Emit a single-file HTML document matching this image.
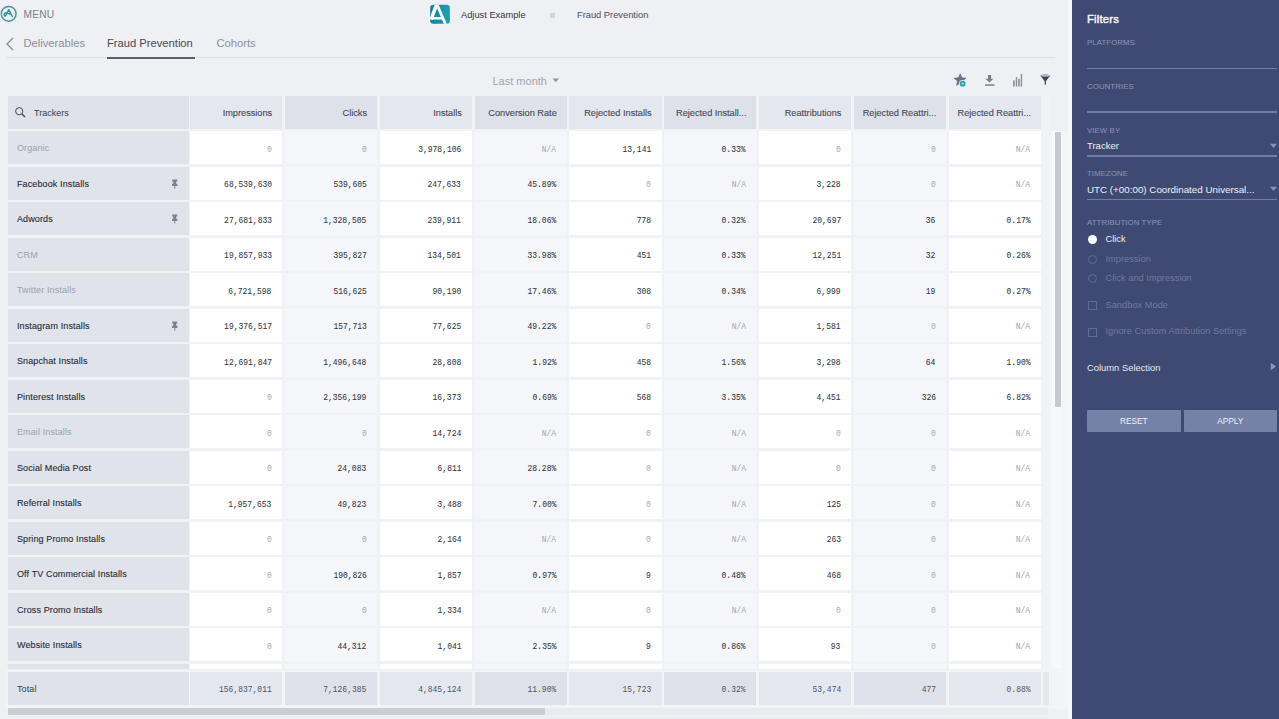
<!DOCTYPE html>
<html><head><meta charset="utf-8"><title>Fraud Prevention</title>
<style>
*{margin:0;padding:0;box-sizing:border-box}
html,body{width:1279px;height:719px;overflow:hidden;background:#eef0f4;font-family:"Liberation Sans",sans-serif}
.a{position:absolute}
.c{position:absolute;overflow:hidden;white-space:nowrap}
.tn{position:absolute;left:9px;font-size:9px;letter-spacing:0.12px;color:#2a2d38;-webkit-text-stroke:0.12px #2a2d38}
.tn.g{color:#9da1ad;-webkit-text-stroke:0}
.num{position:absolute;right:10.5px;font-family:"Liberation Mono",monospace;font-size:9.5px;color:#30333c;-webkit-text-stroke:0.06px #30333c;transform:scaleX(0.84);transform-origin:100% 50%}
.num.z{color:#a3a6b0;-webkit-text-stroke:0}
.hd{position:absolute;right:10px;font-size:9.2px;color:#464955;-webkit-text-stroke:0.12px #464955}
.sb{position:absolute;left:1072px;top:0;width:207px;height:719px;background:#3f4a72}
.lab{position:absolute;left:1087px;font-size:7.8px;color:#8590b8;-webkit-text-stroke:0.1px #8590b8;letter-spacing:0.1px}
.ln{position:absolute;left:1087px;width:190px;height:1.5px;background:#6f7bab}
.st{position:absolute;font-size:9.3px;color:#eef0f6}
.dim{color:#6d78a3}
</style></head><body>
<svg class="a" style="left:0;top:2px" width="24" height="24" viewBox="0 0 24 24"><circle cx="8.7" cy="11.85" r="7.4" fill="none" stroke="#3f98a4" stroke-width="1.4"/><path d="M8.8 7.7 L12.3 14.5 M8.8 7.7 L5.6 13.8 Q4.2 14.6 4.2 12 Q4.3 10.6 6 10.9 L11 12.3" fill="none" stroke="#3a95a2" stroke-width="1.5" stroke-linejoin="round" stroke-linecap="round"/></svg>
<div class="a" style="left:23.5px;top:8.5px;font-size:10.2px;color:#7b7f8c;letter-spacing:0.2px">MENU</div>
<svg class="a" style="left:428px;top:3px" width="24" height="23" viewBox="0 0 24 23"><defs><linearGradient id="lg" x1="0" x2="1" y1="0" y2="0"><stop offset="0" stop-color="#117f95"/><stop offset="1" stop-color="#1ba2b8"/></linearGradient><clipPath id="cp"><rect x="2.2" y="1.7" width="19.7" height="19.1" rx="3.2"/></clipPath></defs><rect x="2.2" y="1.7" width="19.7" height="19.1" rx="3.2" fill="url(#lg)"/><g clip-path="url(#cp)" stroke="#fbfdfe" fill="none"><path d="M9.4 -0.5 L3.1 16.4" stroke-width="3.6"/><path d="M8.2 -0.5 L17.8 22" stroke-width="2.8"/><path d="M0 15.2 H14" stroke-width="2.6"/></g></svg>
<div class="a" style="left:461px;top:9.5px;font-size:9.3px;color:#343743">Adjust Example</div>
<div class="a" style="left:550px;top:12.5px;width:5px;height:5px;background:#d2d4da;border-radius:1px"></div>
<div class="a" style="left:577px;top:9.5px;font-size:9.3px;color:#4b4e5a">Fraud Prevention</div>
<svg class="a" style="left:5px;top:37px" width="10" height="14" viewBox="0 0 10 14"><path d="M8 1 L2 7 L8 13" fill="none" stroke="#8a8e9a" stroke-width="1.3"/></svg>
<div class="a" style="left:23.5px;top:37px;font-size:11.2px;color:#8b8f9b">Deliverables</div>
<div class="a" style="left:107px;top:37px;font-size:11.2px;color:#454855">Fraud Prevention</div>
<div class="a" style="left:216.5px;top:37px;font-size:11.2px;color:#8b8f9b">Cohorts</div>
<div class="a" style="left:6px;top:57px;width:1049px;height:1px;background:#dfe1e6"></div>
<div class="a" style="left:107px;top:56.5px;width:88px;height:2px;background:#5b5e6c"></div>
<div class="a" style="left:492.5px;top:74.5px;font-size:11px;color:#a2a5b0">Last month</div>
<svg class="a" style="left:552px;top:78px" width="8" height="5" viewBox="0 0 8 5"><path d="M0.5 0.5 L7 0.5 L3.75 4.2 Z" fill="#8e919c"/></svg>
<svg class="a" style="left:950px;top:70px" width="20" height="20" viewBox="0 0 20 20"><path d="M10.2 3.7 L11.8 7.6 L15.9 8.2 L12.8 10.9 L13.6 15 L10.2 12.9 L6.5 15.5 L7.4 11 L4.1 8.2 L8.5 7.6 Z" fill="#6b7386" stroke="#6b7386" stroke-width="0.6" stroke-linejoin="round"/><circle cx="12.6" cy="13.65" r="3.6" fill="#f0f2f6"/><circle cx="12.6" cy="13.65" r="2.9" fill="#2a9ea5"/><circle cx="12.6" cy="13.65" r="1.2" fill="#7fe6ea"/></svg>
<svg class="a" style="left:983px;top:72px" width="14" height="16" viewBox="0 0 14 16"><path d="M5 2.9 H8.1 V6.8 H10.3 L6.55 10.4 L2.4 6.8 H5 Z" fill="#7c7f8b"/><rect x="2" y="12.3" width="9.5" height="1.5" fill="#7c7f8b"/></svg>
<svg class="a" style="left:1011px;top:72px" width="13" height="16" viewBox="0 0 13 16"><rect x="2.1" y="8.4" width="1.7" height="6.1" fill="#8c8f9c"/><rect x="4.8" y="5.1" width="1.4" height="9.4" fill="#8c8f9c"/><rect x="7" y="6.8" width="1.9" height="7.7" fill="#9a9dab"/><rect x="9.7" y="1.9" width="1.4" height="12.6" fill="#8c8f9c"/></svg>
<svg class="a" style="left:1039px;top:72px" width="13" height="15" viewBox="0 0 13 15"><path d="M1.2 3.6 Q6.2 1.2 11.3 3.6 L7 9 L6.8 12.7 H5.8 L5.6 9 Z" fill="#3c3f4d"/><ellipse cx="6.25" cy="3.6" rx="4.6" ry="1.2" fill="#b6b8c6"/></svg>
<div class="a" style="left:1044px;top:96px;width:6px;height:33px;background:#e4e6ec;border-radius:1px"></div>
<div class="a" style="left:1044px;top:131px;width:28px;height:578px;background:#f3f4f7"></div>
<div class="a" style="left:1052px;top:131px;width:10px;height:537px;background:#f8f8fa"></div>
<div class="a" style="left:1054.5px;top:132px;width:6.5px;height:275px;background:#c8c9d0;border-radius:1px"></div>
<div class="a" style="left:8px;top:96px;width:1042px;height:573px;background:#f1f2f6"></div>
<div class="c" style="left:8px;top:96px;width:180.5px;height:33px;background:#dfe2e9"><svg class="a" style="left:6px;top:10px" width="13" height="13" viewBox="0 0 13 13"><circle cx="5.2" cy="5.2" r="3.6" fill="none" stroke="#454852" stroke-width="1"/><path d="M7.8 7.8 L11 11" stroke="#454852" stroke-width="1.4"/></svg><div class="a" style="left:26px;top:12px;font-size:9px;color:#3a3d49">Trackers</div></div>
<div class="c" style="left:190px;top:96px;width:92.2px;height:33px;background:#e5e7ef"><div class="hd" style="top:12px">Impressions</div></div>
<div class="c" style="left:284.86px;top:96px;width:92.2px;height:33px;background:#dee1e9"><div class="hd" style="top:12px">Clicks</div></div>
<div class="c" style="left:379.72px;top:96px;width:92.2px;height:33px;background:#e5e7ef"><div class="hd" style="top:12px">Installs</div></div>
<div class="c" style="left:474.58px;top:96px;width:92.2px;height:33px;background:#dee1e9"><div class="hd" style="top:12px">Conversion Rate</div></div>
<div class="c" style="left:569.44px;top:96px;width:92.2px;height:33px;background:#e5e7ef"><div class="hd" style="top:12px">Rejected Installs</div></div>
<div class="c" style="left:664.3px;top:96px;width:92.2px;height:33px;background:#dee1e9"><div class="hd" style="top:12px">Rejected Install...</div></div>
<div class="c" style="left:759.16px;top:96px;width:92.2px;height:33px;background:#e5e7ef"><div class="hd" style="top:12px">Reattributions</div></div>
<div class="c" style="left:854.02px;top:96px;width:92.2px;height:33px;background:#dee1e9"><div class="hd" style="top:12px">Rejected Reattri...</div></div>
<div class="c" style="left:948.88px;top:96px;width:92.2px;height:33px;background:#e5e7ef"><div class="hd" style="top:12px">Rejected Reattri...</div></div>
<div class="c" style="left:8px;top:131px;width:180.5px;height:33.2px;background:#e0e3ea"><div class="tn g" style="top:12.3px">Organic</div></div>
<div class="c" style="left:190px;top:131px;width:92.2px;height:33.2px;background:#ffffff"><div class="num z" style="top:12.6px">0</div></div>
<div class="c" style="left:284.86px;top:131px;width:92.2px;height:33.2px;background:#f5f6fa"><div class="num z" style="top:12.6px">0</div></div>
<div class="c" style="left:379.72px;top:131px;width:92.2px;height:33.2px;background:#ffffff"><div class="num" style="top:12.6px">3,978,106</div></div>
<div class="c" style="left:474.58px;top:131px;width:92.2px;height:33.2px;background:#f5f6fa"><div class="num z" style="top:12.6px">N/A</div></div>
<div class="c" style="left:569.44px;top:131px;width:92.2px;height:33.2px;background:#ffffff"><div class="num" style="top:12.6px">13,141</div></div>
<div class="c" style="left:664.3px;top:131px;width:92.2px;height:33.2px;background:#f5f6fa"><div class="num" style="top:12.6px">0.33%</div></div>
<div class="c" style="left:759.16px;top:131px;width:92.2px;height:33.2px;background:#ffffff"><div class="num z" style="top:12.6px">0</div></div>
<div class="c" style="left:854.02px;top:131px;width:92.2px;height:33.2px;background:#f5f6fa"><div class="num z" style="top:12.6px">0</div></div>
<div class="c" style="left:948.88px;top:131px;width:92.2px;height:33.2px;background:#ffffff"><div class="num z" style="top:12.6px">N/A</div></div>
<div class="c" style="left:8px;top:166.5px;width:180.5px;height:33.2px;background:#e0e3ea"><div class="tn" style="top:12.3px">Facebook Installs</div><svg class="a" style="left:163px;top:12px" width="8" height="10" viewBox="0 0 8 10"><path d="M1.2 0.4 H6.2 V2.6 H5.2 V4.6 L6.4 5.2 V7 H1 V5.2 L2.2 4.6 V2.6 H1.2 Z M3.3 7 H4.3 V9.5 H3.3 Z" fill="#7e818d"/></svg></div>
<div class="c" style="left:190px;top:166.5px;width:92.2px;height:33.2px;background:#ffffff"><div class="num" style="top:12.6px">68,539,630</div></div>
<div class="c" style="left:284.86px;top:166.5px;width:92.2px;height:33.2px;background:#f5f6fa"><div class="num" style="top:12.6px">539,605</div></div>
<div class="c" style="left:379.72px;top:166.5px;width:92.2px;height:33.2px;background:#ffffff"><div class="num" style="top:12.6px">247,633</div></div>
<div class="c" style="left:474.58px;top:166.5px;width:92.2px;height:33.2px;background:#f5f6fa"><div class="num" style="top:12.6px">45.89%</div></div>
<div class="c" style="left:569.44px;top:166.5px;width:92.2px;height:33.2px;background:#ffffff"><div class="num z" style="top:12.6px">0</div></div>
<div class="c" style="left:664.3px;top:166.5px;width:92.2px;height:33.2px;background:#f5f6fa"><div class="num z" style="top:12.6px">N/A</div></div>
<div class="c" style="left:759.16px;top:166.5px;width:92.2px;height:33.2px;background:#ffffff"><div class="num" style="top:12.6px">3,228</div></div>
<div class="c" style="left:854.02px;top:166.5px;width:92.2px;height:33.2px;background:#f5f6fa"><div class="num z" style="top:12.6px">0</div></div>
<div class="c" style="left:948.88px;top:166.5px;width:92.2px;height:33.2px;background:#ffffff"><div class="num z" style="top:12.6px">N/A</div></div>
<div class="c" style="left:8px;top:202px;width:180.5px;height:33.2px;background:#e0e3ea"><div class="tn" style="top:12.3px">Adwords</div><svg class="a" style="left:163px;top:12px" width="8" height="10" viewBox="0 0 8 10"><path d="M1.2 0.4 H6.2 V2.6 H5.2 V4.6 L6.4 5.2 V7 H1 V5.2 L2.2 4.6 V2.6 H1.2 Z M3.3 7 H4.3 V9.5 H3.3 Z" fill="#7e818d"/></svg></div>
<div class="c" style="left:190px;top:202px;width:92.2px;height:33.2px;background:#ffffff"><div class="num" style="top:12.6px">27,681,833</div></div>
<div class="c" style="left:284.86px;top:202px;width:92.2px;height:33.2px;background:#f5f6fa"><div class="num" style="top:12.6px">1,328,505</div></div>
<div class="c" style="left:379.72px;top:202px;width:92.2px;height:33.2px;background:#ffffff"><div class="num" style="top:12.6px">239,911</div></div>
<div class="c" style="left:474.58px;top:202px;width:92.2px;height:33.2px;background:#f5f6fa"><div class="num" style="top:12.6px">18.06%</div></div>
<div class="c" style="left:569.44px;top:202px;width:92.2px;height:33.2px;background:#ffffff"><div class="num" style="top:12.6px">778</div></div>
<div class="c" style="left:664.3px;top:202px;width:92.2px;height:33.2px;background:#f5f6fa"><div class="num" style="top:12.6px">0.32%</div></div>
<div class="c" style="left:759.16px;top:202px;width:92.2px;height:33.2px;background:#ffffff"><div class="num" style="top:12.6px">20,697</div></div>
<div class="c" style="left:854.02px;top:202px;width:92.2px;height:33.2px;background:#f5f6fa"><div class="num" style="top:12.6px">36</div></div>
<div class="c" style="left:948.88px;top:202px;width:92.2px;height:33.2px;background:#ffffff"><div class="num" style="top:12.6px">0.17%</div></div>
<div class="c" style="left:8px;top:237.5px;width:180.5px;height:33.2px;background:#e0e3ea"><div class="tn g" style="top:12.3px">CRM</div></div>
<div class="c" style="left:190px;top:237.5px;width:92.2px;height:33.2px;background:#ffffff"><div class="num" style="top:12.6px">19,857,933</div></div>
<div class="c" style="left:284.86px;top:237.5px;width:92.2px;height:33.2px;background:#f5f6fa"><div class="num" style="top:12.6px">395,827</div></div>
<div class="c" style="left:379.72px;top:237.5px;width:92.2px;height:33.2px;background:#ffffff"><div class="num" style="top:12.6px">134,501</div></div>
<div class="c" style="left:474.58px;top:237.5px;width:92.2px;height:33.2px;background:#f5f6fa"><div class="num" style="top:12.6px">33.98%</div></div>
<div class="c" style="left:569.44px;top:237.5px;width:92.2px;height:33.2px;background:#ffffff"><div class="num" style="top:12.6px">451</div></div>
<div class="c" style="left:664.3px;top:237.5px;width:92.2px;height:33.2px;background:#f5f6fa"><div class="num" style="top:12.6px">0.33%</div></div>
<div class="c" style="left:759.16px;top:237.5px;width:92.2px;height:33.2px;background:#ffffff"><div class="num" style="top:12.6px">12,251</div></div>
<div class="c" style="left:854.02px;top:237.5px;width:92.2px;height:33.2px;background:#f5f6fa"><div class="num" style="top:12.6px">32</div></div>
<div class="c" style="left:948.88px;top:237.5px;width:92.2px;height:33.2px;background:#ffffff"><div class="num" style="top:12.6px">0.26%</div></div>
<div class="c" style="left:8px;top:273px;width:180.5px;height:33.2px;background:#e0e3ea"><div class="tn g" style="top:12.3px">Twitter Installs</div></div>
<div class="c" style="left:190px;top:273px;width:92.2px;height:33.2px;background:#ffffff"><div class="num" style="top:12.6px">6,721,598</div></div>
<div class="c" style="left:284.86px;top:273px;width:92.2px;height:33.2px;background:#f5f6fa"><div class="num" style="top:12.6px">516,625</div></div>
<div class="c" style="left:379.72px;top:273px;width:92.2px;height:33.2px;background:#ffffff"><div class="num" style="top:12.6px">90,190</div></div>
<div class="c" style="left:474.58px;top:273px;width:92.2px;height:33.2px;background:#f5f6fa"><div class="num" style="top:12.6px">17.46%</div></div>
<div class="c" style="left:569.44px;top:273px;width:92.2px;height:33.2px;background:#ffffff"><div class="num" style="top:12.6px">308</div></div>
<div class="c" style="left:664.3px;top:273px;width:92.2px;height:33.2px;background:#f5f6fa"><div class="num" style="top:12.6px">0.34%</div></div>
<div class="c" style="left:759.16px;top:273px;width:92.2px;height:33.2px;background:#ffffff"><div class="num" style="top:12.6px">6,999</div></div>
<div class="c" style="left:854.02px;top:273px;width:92.2px;height:33.2px;background:#f5f6fa"><div class="num" style="top:12.6px">19</div></div>
<div class="c" style="left:948.88px;top:273px;width:92.2px;height:33.2px;background:#ffffff"><div class="num" style="top:12.6px">0.27%</div></div>
<div class="c" style="left:8px;top:308.5px;width:180.5px;height:33.2px;background:#e0e3ea"><div class="tn" style="top:12.3px">Instagram Installs</div><svg class="a" style="left:163px;top:12px" width="8" height="10" viewBox="0 0 8 10"><path d="M1.2 0.4 H6.2 V2.6 H5.2 V4.6 L6.4 5.2 V7 H1 V5.2 L2.2 4.6 V2.6 H1.2 Z M3.3 7 H4.3 V9.5 H3.3 Z" fill="#7e818d"/></svg></div>
<div class="c" style="left:190px;top:308.5px;width:92.2px;height:33.2px;background:#ffffff"><div class="num" style="top:12.6px">19,376,517</div></div>
<div class="c" style="left:284.86px;top:308.5px;width:92.2px;height:33.2px;background:#f5f6fa"><div class="num" style="top:12.6px">157,713</div></div>
<div class="c" style="left:379.72px;top:308.5px;width:92.2px;height:33.2px;background:#ffffff"><div class="num" style="top:12.6px">77,625</div></div>
<div class="c" style="left:474.58px;top:308.5px;width:92.2px;height:33.2px;background:#f5f6fa"><div class="num" style="top:12.6px">49.22%</div></div>
<div class="c" style="left:569.44px;top:308.5px;width:92.2px;height:33.2px;background:#ffffff"><div class="num z" style="top:12.6px">0</div></div>
<div class="c" style="left:664.3px;top:308.5px;width:92.2px;height:33.2px;background:#f5f6fa"><div class="num z" style="top:12.6px">N/A</div></div>
<div class="c" style="left:759.16px;top:308.5px;width:92.2px;height:33.2px;background:#ffffff"><div class="num" style="top:12.6px">1,581</div></div>
<div class="c" style="left:854.02px;top:308.5px;width:92.2px;height:33.2px;background:#f5f6fa"><div class="num z" style="top:12.6px">0</div></div>
<div class="c" style="left:948.88px;top:308.5px;width:92.2px;height:33.2px;background:#ffffff"><div class="num z" style="top:12.6px">N/A</div></div>
<div class="c" style="left:8px;top:344px;width:180.5px;height:33.2px;background:#e0e3ea"><div class="tn" style="top:12.3px">Snapchat Installs</div></div>
<div class="c" style="left:190px;top:344px;width:92.2px;height:33.2px;background:#ffffff"><div class="num" style="top:12.6px">12,691,847</div></div>
<div class="c" style="left:284.86px;top:344px;width:92.2px;height:33.2px;background:#f5f6fa"><div class="num" style="top:12.6px">1,496,648</div></div>
<div class="c" style="left:379.72px;top:344px;width:92.2px;height:33.2px;background:#ffffff"><div class="num" style="top:12.6px">28,808</div></div>
<div class="c" style="left:474.58px;top:344px;width:92.2px;height:33.2px;background:#f5f6fa"><div class="num" style="top:12.6px">1.92%</div></div>
<div class="c" style="left:569.44px;top:344px;width:92.2px;height:33.2px;background:#ffffff"><div class="num" style="top:12.6px">458</div></div>
<div class="c" style="left:664.3px;top:344px;width:92.2px;height:33.2px;background:#f5f6fa"><div class="num" style="top:12.6px">1.56%</div></div>
<div class="c" style="left:759.16px;top:344px;width:92.2px;height:33.2px;background:#ffffff"><div class="num" style="top:12.6px">3,298</div></div>
<div class="c" style="left:854.02px;top:344px;width:92.2px;height:33.2px;background:#f5f6fa"><div class="num" style="top:12.6px">64</div></div>
<div class="c" style="left:948.88px;top:344px;width:92.2px;height:33.2px;background:#ffffff"><div class="num" style="top:12.6px">1.90%</div></div>
<div class="c" style="left:8px;top:379.5px;width:180.5px;height:33.2px;background:#e0e3ea"><div class="tn" style="top:12.3px">Pinterest Installs</div></div>
<div class="c" style="left:190px;top:379.5px;width:92.2px;height:33.2px;background:#ffffff"><div class="num z" style="top:12.6px">0</div></div>
<div class="c" style="left:284.86px;top:379.5px;width:92.2px;height:33.2px;background:#f5f6fa"><div class="num" style="top:12.6px">2,356,199</div></div>
<div class="c" style="left:379.72px;top:379.5px;width:92.2px;height:33.2px;background:#ffffff"><div class="num" style="top:12.6px">16,373</div></div>
<div class="c" style="left:474.58px;top:379.5px;width:92.2px;height:33.2px;background:#f5f6fa"><div class="num" style="top:12.6px">0.69%</div></div>
<div class="c" style="left:569.44px;top:379.5px;width:92.2px;height:33.2px;background:#ffffff"><div class="num" style="top:12.6px">568</div></div>
<div class="c" style="left:664.3px;top:379.5px;width:92.2px;height:33.2px;background:#f5f6fa"><div class="num" style="top:12.6px">3.35%</div></div>
<div class="c" style="left:759.16px;top:379.5px;width:92.2px;height:33.2px;background:#ffffff"><div class="num" style="top:12.6px">4,451</div></div>
<div class="c" style="left:854.02px;top:379.5px;width:92.2px;height:33.2px;background:#f5f6fa"><div class="num" style="top:12.6px">326</div></div>
<div class="c" style="left:948.88px;top:379.5px;width:92.2px;height:33.2px;background:#ffffff"><div class="num" style="top:12.6px">6.82%</div></div>
<div class="c" style="left:8px;top:415px;width:180.5px;height:33.2px;background:#e0e3ea"><div class="tn g" style="top:12.3px">Email Installs</div></div>
<div class="c" style="left:190px;top:415px;width:92.2px;height:33.2px;background:#ffffff"><div class="num z" style="top:12.6px">0</div></div>
<div class="c" style="left:284.86px;top:415px;width:92.2px;height:33.2px;background:#f5f6fa"><div class="num z" style="top:12.6px">0</div></div>
<div class="c" style="left:379.72px;top:415px;width:92.2px;height:33.2px;background:#ffffff"><div class="num" style="top:12.6px">14,724</div></div>
<div class="c" style="left:474.58px;top:415px;width:92.2px;height:33.2px;background:#f5f6fa"><div class="num z" style="top:12.6px">N/A</div></div>
<div class="c" style="left:569.44px;top:415px;width:92.2px;height:33.2px;background:#ffffff"><div class="num z" style="top:12.6px">0</div></div>
<div class="c" style="left:664.3px;top:415px;width:92.2px;height:33.2px;background:#f5f6fa"><div class="num z" style="top:12.6px">N/A</div></div>
<div class="c" style="left:759.16px;top:415px;width:92.2px;height:33.2px;background:#ffffff"><div class="num z" style="top:12.6px">0</div></div>
<div class="c" style="left:854.02px;top:415px;width:92.2px;height:33.2px;background:#f5f6fa"><div class="num z" style="top:12.6px">0</div></div>
<div class="c" style="left:948.88px;top:415px;width:92.2px;height:33.2px;background:#ffffff"><div class="num z" style="top:12.6px">N/A</div></div>
<div class="c" style="left:8px;top:450.5px;width:180.5px;height:33.2px;background:#e0e3ea"><div class="tn" style="top:12.3px">Social Media Post</div></div>
<div class="c" style="left:190px;top:450.5px;width:92.2px;height:33.2px;background:#ffffff"><div class="num z" style="top:12.6px">0</div></div>
<div class="c" style="left:284.86px;top:450.5px;width:92.2px;height:33.2px;background:#f5f6fa"><div class="num" style="top:12.6px">24,083</div></div>
<div class="c" style="left:379.72px;top:450.5px;width:92.2px;height:33.2px;background:#ffffff"><div class="num" style="top:12.6px">6,811</div></div>
<div class="c" style="left:474.58px;top:450.5px;width:92.2px;height:33.2px;background:#f5f6fa"><div class="num" style="top:12.6px">28.28%</div></div>
<div class="c" style="left:569.44px;top:450.5px;width:92.2px;height:33.2px;background:#ffffff"><div class="num z" style="top:12.6px">0</div></div>
<div class="c" style="left:664.3px;top:450.5px;width:92.2px;height:33.2px;background:#f5f6fa"><div class="num z" style="top:12.6px">N/A</div></div>
<div class="c" style="left:759.16px;top:450.5px;width:92.2px;height:33.2px;background:#ffffff"><div class="num z" style="top:12.6px">0</div></div>
<div class="c" style="left:854.02px;top:450.5px;width:92.2px;height:33.2px;background:#f5f6fa"><div class="num z" style="top:12.6px">0</div></div>
<div class="c" style="left:948.88px;top:450.5px;width:92.2px;height:33.2px;background:#ffffff"><div class="num z" style="top:12.6px">N/A</div></div>
<div class="c" style="left:8px;top:486px;width:180.5px;height:33.2px;background:#e0e3ea"><div class="tn" style="top:12.3px">Referral Installs</div></div>
<div class="c" style="left:190px;top:486px;width:92.2px;height:33.2px;background:#ffffff"><div class="num" style="top:12.6px">1,957,653</div></div>
<div class="c" style="left:284.86px;top:486px;width:92.2px;height:33.2px;background:#f5f6fa"><div class="num" style="top:12.6px">49,823</div></div>
<div class="c" style="left:379.72px;top:486px;width:92.2px;height:33.2px;background:#ffffff"><div class="num" style="top:12.6px">3,488</div></div>
<div class="c" style="left:474.58px;top:486px;width:92.2px;height:33.2px;background:#f5f6fa"><div class="num" style="top:12.6px">7.00%</div></div>
<div class="c" style="left:569.44px;top:486px;width:92.2px;height:33.2px;background:#ffffff"><div class="num z" style="top:12.6px">0</div></div>
<div class="c" style="left:664.3px;top:486px;width:92.2px;height:33.2px;background:#f5f6fa"><div class="num z" style="top:12.6px">N/A</div></div>
<div class="c" style="left:759.16px;top:486px;width:92.2px;height:33.2px;background:#ffffff"><div class="num" style="top:12.6px">125</div></div>
<div class="c" style="left:854.02px;top:486px;width:92.2px;height:33.2px;background:#f5f6fa"><div class="num z" style="top:12.6px">0</div></div>
<div class="c" style="left:948.88px;top:486px;width:92.2px;height:33.2px;background:#ffffff"><div class="num z" style="top:12.6px">N/A</div></div>
<div class="c" style="left:8px;top:521.5px;width:180.5px;height:33.2px;background:#e0e3ea"><div class="tn" style="top:12.3px">Spring Promo Installs</div></div>
<div class="c" style="left:190px;top:521.5px;width:92.2px;height:33.2px;background:#ffffff"><div class="num z" style="top:12.6px">0</div></div>
<div class="c" style="left:284.86px;top:521.5px;width:92.2px;height:33.2px;background:#f5f6fa"><div class="num z" style="top:12.6px">0</div></div>
<div class="c" style="left:379.72px;top:521.5px;width:92.2px;height:33.2px;background:#ffffff"><div class="num" style="top:12.6px">2,164</div></div>
<div class="c" style="left:474.58px;top:521.5px;width:92.2px;height:33.2px;background:#f5f6fa"><div class="num z" style="top:12.6px">N/A</div></div>
<div class="c" style="left:569.44px;top:521.5px;width:92.2px;height:33.2px;background:#ffffff"><div class="num z" style="top:12.6px">0</div></div>
<div class="c" style="left:664.3px;top:521.5px;width:92.2px;height:33.2px;background:#f5f6fa"><div class="num z" style="top:12.6px">N/A</div></div>
<div class="c" style="left:759.16px;top:521.5px;width:92.2px;height:33.2px;background:#ffffff"><div class="num" style="top:12.6px">263</div></div>
<div class="c" style="left:854.02px;top:521.5px;width:92.2px;height:33.2px;background:#f5f6fa"><div class="num z" style="top:12.6px">0</div></div>
<div class="c" style="left:948.88px;top:521.5px;width:92.2px;height:33.2px;background:#ffffff"><div class="num z" style="top:12.6px">N/A</div></div>
<div class="c" style="left:8px;top:557px;width:180.5px;height:33.2px;background:#e0e3ea"><div class="tn" style="top:12.3px">Off TV Commercial Installs</div></div>
<div class="c" style="left:190px;top:557px;width:92.2px;height:33.2px;background:#ffffff"><div class="num z" style="top:12.6px">0</div></div>
<div class="c" style="left:284.86px;top:557px;width:92.2px;height:33.2px;background:#f5f6fa"><div class="num" style="top:12.6px">190,826</div></div>
<div class="c" style="left:379.72px;top:557px;width:92.2px;height:33.2px;background:#ffffff"><div class="num" style="top:12.6px">1,857</div></div>
<div class="c" style="left:474.58px;top:557px;width:92.2px;height:33.2px;background:#f5f6fa"><div class="num" style="top:12.6px">0.97%</div></div>
<div class="c" style="left:569.44px;top:557px;width:92.2px;height:33.2px;background:#ffffff"><div class="num" style="top:12.6px">9</div></div>
<div class="c" style="left:664.3px;top:557px;width:92.2px;height:33.2px;background:#f5f6fa"><div class="num" style="top:12.6px">0.48%</div></div>
<div class="c" style="left:759.16px;top:557px;width:92.2px;height:33.2px;background:#ffffff"><div class="num" style="top:12.6px">468</div></div>
<div class="c" style="left:854.02px;top:557px;width:92.2px;height:33.2px;background:#f5f6fa"><div class="num z" style="top:12.6px">0</div></div>
<div class="c" style="left:948.88px;top:557px;width:92.2px;height:33.2px;background:#ffffff"><div class="num z" style="top:12.6px">N/A</div></div>
<div class="c" style="left:8px;top:592.5px;width:180.5px;height:33.2px;background:#e0e3ea"><div class="tn" style="top:12.3px">Cross Promo Installs</div></div>
<div class="c" style="left:190px;top:592.5px;width:92.2px;height:33.2px;background:#ffffff"><div class="num z" style="top:12.6px">0</div></div>
<div class="c" style="left:284.86px;top:592.5px;width:92.2px;height:33.2px;background:#f5f6fa"><div class="num z" style="top:12.6px">0</div></div>
<div class="c" style="left:379.72px;top:592.5px;width:92.2px;height:33.2px;background:#ffffff"><div class="num" style="top:12.6px">1,334</div></div>
<div class="c" style="left:474.58px;top:592.5px;width:92.2px;height:33.2px;background:#f5f6fa"><div class="num z" style="top:12.6px">N/A</div></div>
<div class="c" style="left:569.44px;top:592.5px;width:92.2px;height:33.2px;background:#ffffff"><div class="num z" style="top:12.6px">0</div></div>
<div class="c" style="left:664.3px;top:592.5px;width:92.2px;height:33.2px;background:#f5f6fa"><div class="num z" style="top:12.6px">N/A</div></div>
<div class="c" style="left:759.16px;top:592.5px;width:92.2px;height:33.2px;background:#ffffff"><div class="num z" style="top:12.6px">0</div></div>
<div class="c" style="left:854.02px;top:592.5px;width:92.2px;height:33.2px;background:#f5f6fa"><div class="num z" style="top:12.6px">0</div></div>
<div class="c" style="left:948.88px;top:592.5px;width:92.2px;height:33.2px;background:#ffffff"><div class="num z" style="top:12.6px">N/A</div></div>
<div class="c" style="left:8px;top:628px;width:180.5px;height:33.2px;background:#e0e3ea"><div class="tn" style="top:12.3px">Website Installs</div></div>
<div class="c" style="left:190px;top:628px;width:92.2px;height:33.2px;background:#ffffff"><div class="num z" style="top:12.6px">0</div></div>
<div class="c" style="left:284.86px;top:628px;width:92.2px;height:33.2px;background:#f5f6fa"><div class="num" style="top:12.6px">44,312</div></div>
<div class="c" style="left:379.72px;top:628px;width:92.2px;height:33.2px;background:#ffffff"><div class="num" style="top:12.6px">1,041</div></div>
<div class="c" style="left:474.58px;top:628px;width:92.2px;height:33.2px;background:#f5f6fa"><div class="num" style="top:12.6px">2.35%</div></div>
<div class="c" style="left:569.44px;top:628px;width:92.2px;height:33.2px;background:#ffffff"><div class="num" style="top:12.6px">9</div></div>
<div class="c" style="left:664.3px;top:628px;width:92.2px;height:33.2px;background:#f5f6fa"><div class="num" style="top:12.6px">0.86%</div></div>
<div class="c" style="left:759.16px;top:628px;width:92.2px;height:33.2px;background:#ffffff"><div class="num" style="top:12.6px">93</div></div>
<div class="c" style="left:854.02px;top:628px;width:92.2px;height:33.2px;background:#f5f6fa"><div class="num z" style="top:12.6px">0</div></div>
<div class="c" style="left:948.88px;top:628px;width:92.2px;height:33.2px;background:#ffffff"><div class="num z" style="top:12.6px">N/A</div></div>
<div class="c" style="left:8px;top:663.5px;width:180.5px;height:5.5px;background:#e0e3ea"></div>
<div class="c" style="left:190px;top:663.5px;width:92.2px;height:5.5px;background:#ffffff"></div>
<div class="c" style="left:284.86px;top:663.5px;width:92.2px;height:5.5px;background:#f5f6fa"></div>
<div class="c" style="left:379.72px;top:663.5px;width:92.2px;height:5.5px;background:#ffffff"></div>
<div class="c" style="left:474.58px;top:663.5px;width:92.2px;height:5.5px;background:#f5f6fa"></div>
<div class="c" style="left:569.44px;top:663.5px;width:92.2px;height:5.5px;background:#ffffff"></div>
<div class="c" style="left:664.3px;top:663.5px;width:92.2px;height:5.5px;background:#f5f6fa"></div>
<div class="c" style="left:759.16px;top:663.5px;width:92.2px;height:5.5px;background:#ffffff"></div>
<div class="c" style="left:854.02px;top:663.5px;width:92.2px;height:5.5px;background:#f5f6fa"></div>
<div class="c" style="left:948.88px;top:663.5px;width:92.2px;height:5.5px;background:#ffffff"></div>
<div class="a" style="left:6px;top:670px;width:1044px;height:38px;background:#f3f4f7"></div>
<div class="c" style="left:8px;top:672px;width:180.5px;height:33px;background:#dfe2e9"><div class="tn" style="top:11.5px;color:#3c3f4a;-webkit-text-stroke:0">Total</div></div>
<div class="c" style="left:190px;top:672px;width:92.2px;height:33px;background:#e5e7ef"><div class="num" style="top:12px;color:#50535f;-webkit-text-stroke:0">156,837,011</div></div>
<div class="c" style="left:284.86px;top:672px;width:92.2px;height:33px;background:#dee1e9"><div class="num" style="top:12px;color:#50535f;-webkit-text-stroke:0">7,126,385</div></div>
<div class="c" style="left:379.72px;top:672px;width:92.2px;height:33px;background:#e5e7ef"><div class="num" style="top:12px;color:#50535f;-webkit-text-stroke:0">4,845,124</div></div>
<div class="c" style="left:474.58px;top:672px;width:92.2px;height:33px;background:#dee1e9"><div class="num" style="top:12px;color:#50535f;-webkit-text-stroke:0">11.90%</div></div>
<div class="c" style="left:569.44px;top:672px;width:92.2px;height:33px;background:#e5e7ef"><div class="num" style="top:12px;color:#50535f;-webkit-text-stroke:0">15,723</div></div>
<div class="c" style="left:664.3px;top:672px;width:92.2px;height:33px;background:#dee1e9"><div class="num" style="top:12px;color:#50535f;-webkit-text-stroke:0">0.32%</div></div>
<div class="c" style="left:759.16px;top:672px;width:92.2px;height:33px;background:#e5e7ef"><div class="num" style="top:12px;color:#50535f;-webkit-text-stroke:0">53,474</div></div>
<div class="c" style="left:854.02px;top:672px;width:92.2px;height:33px;background:#dee1e9"><div class="num" style="top:12px;color:#50535f;-webkit-text-stroke:0">477</div></div>
<div class="c" style="left:948.88px;top:672px;width:92.2px;height:33px;background:#e5e7ef"><div class="num" style="top:12px;color:#50535f;-webkit-text-stroke:0">0.88%</div></div>
<div class="a" style="left:1043px;top:672px;width:6px;height:33px;background:#e4e6ec"></div>
<div class="a" style="left:8px;top:708px;width:1040px;height:7px;background:#eaebf0"></div>
<div class="a" style="left:8px;top:708px;width:537px;height:7px;background:#cdced5;border-radius:1px"></div>
<div class="a" style="left:1068px;top:0;width:4px;height:719px;background:#f6f7f9"></div>
<div class="sb"></div>
<div class="a" style="left:1087px;top:13px;font-size:11.3px;color:#f4f5fa;-webkit-text-stroke:0.45px #f4f5fa;letter-spacing:0.2px">Filters</div>
<div class="lab" style="top:38px">PLATFORMS</div>
<div class="ln" style="top:67.5px"></div>
<div class="lab" style="top:81.5px">COUNTRIES</div>
<div class="ln" style="top:111px"></div>
<div class="lab" style="top:125.5px">VIEW BY</div>
<div class="st" style="left:1087px;top:140px;font-size:9.5px">Tracker</div>
<svg class="a" style="left:1269px;top:143px" width="9" height="6" viewBox="0 0 9 6"><path d="M1 0.8 H8 L4.5 5 Z" fill="#8893bb"/></svg>
<div class="ln" style="top:155px"></div>
<div class="lab" style="top:169px">TIMEZONE</div>
<div class="st" style="left:1087px;top:183.5px;font-size:9.8px">UTC (+00:00) Coordinated Universal...</div>
<svg class="a" style="left:1269px;top:186px" width="9" height="6" viewBox="0 0 9 6"><path d="M1 0.8 H8 L4.5 5 Z" fill="#8893bb"/></svg>
<div class="ln" style="top:198.5px"></div>
<div class="lab" style="top:217.5px">ATTRIBUTION TYPE</div>
<div class="a" style="left:1087.7px;top:235.2px;width:9px;height:9px;border-radius:50%;background:#fff"></div>
<div class="st" style="left:1105.5px;top:234px">Click</div>
<div class="a" style="left:1087.7px;top:254.7px;width:9px;height:9px;border-radius:50%;border:1px solid #5f6a96"></div>
<div class="st dim" style="left:1105.5px;top:253.5px">Impression</div>
<div class="a" style="left:1087.7px;top:274.2px;width:9px;height:9px;border-radius:50%;border:1px solid #5f6a96"></div>
<div class="st dim" style="left:1105.5px;top:273px">Click and Impression</div>
<div class="a" style="left:1088px;top:301px;width:9px;height:9px;border:1px solid #5f6a96"></div>
<div class="st dim" style="left:1105.5px;top:299.5px">Sandbox Mode</div>
<div class="a" style="left:1088px;top:327.5px;width:9px;height:9px;border:1px solid #5f6a96"></div>
<div class="st dim" style="left:1105.5px;top:326px">Ignore Custom Attribution Settings</div>
<div class="st" style="left:1087px;top:362px;font-size:9.4px;color:#e6e8f0">Column Selection</div>
<svg class="a" style="left:1270px;top:362px" width="7" height="9" viewBox="0 0 7 9"><path d="M0.8 0.8 L6 4.5 L0.8 8.2 Z" fill="#8c97be"/></svg>
<div class="a" style="left:1087px;top:410px;width:93.5px;height:22px;background:#7681a8;border-radius:1px"></div>
<div class="a" style="left:1183.5px;top:410px;width:93.5px;height:22px;background:#7681a8;border-radius:1px"></div>
<div class="a" style="left:1087px;top:416px;width:93.5px;text-align:center;font-size:8.3px;color:#f0f1f6">RESET</div>
<div class="a" style="left:1183.5px;top:416px;width:93.5px;text-align:center;font-size:8.3px;color:#f0f1f6">APPLY</div>
</body></html>
